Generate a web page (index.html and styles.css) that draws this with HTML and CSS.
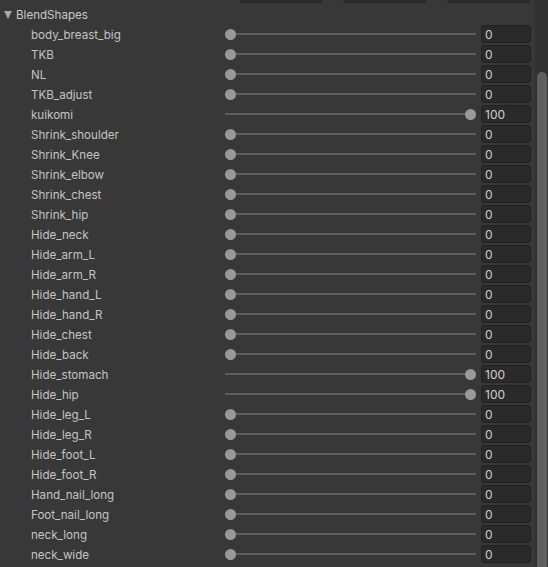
FILE: index.html
```html
<!DOCTYPE html>
<html>
<head>
<meta charset="utf-8">
<link rel="stylesheet" href="styles.css">
</head>
<body>
<div class="window">
  <div class="main">
    <div class="topbar">
      <div class="tbtn b1"></div>
      <div class="tbtn b2"></div>
      <div class="tbtn b3"></div>
    </div>
    <div class="header">
      <span class="tri"></span>
      <span class="htext">BlendShapes</span>
    </div>
    <div class="rows" id="rows"></div>
  </div>
  <div class="scrollbar"><div class="thumb"></div></div>
</div>
<script src="script.js"></script>
</body>
</html>
```
FILE: script.js
```js
const data = [
  ["body_breast_big",0],["TKB",0],["NL",0],["TKB_adjust",0],["kuikomi",100],
  ["Shrink_shoulder",0],["Shrink_Knee",0],["Shrink_elbow",0],["Shrink_chest",0],
  ["Shrink_hip",0],["Hide_neck",0],["Hide_arm_L",0],["Hide_arm_R",0],
  ["Hide_hand_L",0],["Hide_hand_R",0],["Hide_chest",0],["Hide_back",0],
  ["Hide_stomach",100],["Hide_hip",100],["Hide_leg_L",0],["Hide_leg_R",0],
  ["Hide_foot_L",0],["Hide_foot_R",0],["Hand_nail_long",0],["Foot_nail_long",0],
  ["neck_long",0],["neck_wide",0]
];
const rows = document.getElementById('rows');
for (const [name, v] of data) {
  const r = document.createElement('div');
  r.className = 'row';
  r.innerHTML =
    '<span class="label">' + name + '</span>' +
    '<div class="slider"><div class="track"></div>' +
    '<div class="knob" style="left:' + (v * 2.4) + 'px"></div></div>' +
    '<div class="field">' + v + '</div>';
  rows.appendChild(r);
}
```
FILE: styles.css
```css
html, body {
  margin: 0;
  padding: 0;
  background: #383838;
  overflow: hidden;
}
body {
  font-family: Inter, "Noto Sans", sans-serif;
  font-size: 11.6px;
  color: #c4c4c4;
}
.window {
  display: flex;
  width: 548px;
  height: 567px;
}
.main {
  width: 535px;
  flex: none;
}
.topbar {
  height: 4px;
  display: flex;
  padding-left: 240px;
  gap: 20px;
}
.tbtn {
  height: 2px;
  background: #2c2c2c;
  border-bottom: 1px solid #242424;
  border-radius: 0 0 3px 3px;
}
.b1 { width: 83px; }
.b2 { width: 84px; }
.b3 { width: 83px; }
.header {
  height: 20px;
  display: flex;
  align-items: center;
  padding-left: 4px;
}
.tri {
  width: 0;
  height: 0;
  border-left: 4px solid transparent;
  border-right: 4px solid transparent;
  border-top: 8px solid #a8a8a8;
  margin-right: 4px;
  margin-top: 1px;
}
.htext {
  color: #c8c8c8;
  padding-top: 1px;
}
.row {
  height: 20px;
  display: flex;
  align-items: center;
}
.label {
  width: 194px;
  padding-left: 31px;
  padding-top: 1px;
  flex: none;
  white-space: nowrap;
}
.slider {
  position: relative;
  width: 251px;
  height: 20px;
  flex: none;
}
.track {
  position: absolute;
  left: 0;
  right: 0;
  top: 9px;
  height: 2px;
  background: #5e5e5e;
}
.knob {
  position: absolute;
  top: 4.5px;
  width: 11px;
  height: 11px;
  border-radius: 50%;
  background: #999999;
}
.field {
  margin-left: 5px;
  height: 16px;
  line-height: 17px;
  background: #2a2a2a;
  border: 1px solid #212121;
  border-radius: 3px;
  padding-left: 3px;
  box-sizing: content-box;
  width: 45px;
  font-size: 12px;
  color: #d0d0d0;
}
.scrollbar {
  width: 13px;
  flex: none;
  background: #313131;
  position: relative;
}
.thumb {
  position: absolute;
  left: 2px;
  right: 1px;
  top: 72px;
  bottom: 0;
  background: #5f5f5f;
  border-radius: 5px 5px 0 0;
}
```
